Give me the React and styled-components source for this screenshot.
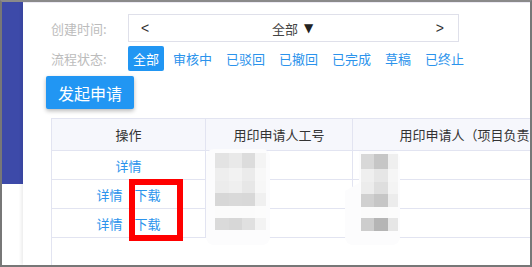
import React from "react";
import styled, { createGlobalStyle } from "styled-components";

const GlobalStyle = createGlobalStyle`
  * { box-sizing: border-box; }
  html, body { margin: 0; padding: 0; background: #fff; }
  body {
    font-family: "Noto Sans CJK SC", "Noto Sans", "Liberation Sans", sans-serif;
    font-size: 13px;
  }
`;

const Frame = styled.div`
  width: 532px;
  height: 267px;
  border: 2px solid #777;
  border-top-color: #8a8a8a;
  display: flex;
  overflow: hidden;
  background: #fff;
`;

const Sidebar = styled.div`
  width: 21px;
  flex: none;
  display: flex;
  flex-direction: column;
`;

const SideBlue = styled.div`
  height: 182px;
  background: #3d4aa9;
`;

const Main = styled.div`
  flex: 1;
  min-width: 0;
  display: flex;
  flex-direction: column;
  padding: 11px 0 0 28px;
  box-shadow: -2px 0 3px rgba(0, 0, 0, 0.07);
  position: relative;
  border-top: 1px solid #eceaf4;
`;

const FormRow = styled.div`
  display: flex;
  align-items: center;
  height: ${(p) => p.$h}px;
  margin-bottom: ${(p) => p.$mb}px;
`;

const Label = styled.div`
  width: 77px;
  flex: none;
  color: #bcbcbc;
  font-size: 13px;
  white-space: nowrap;
`;

const DateBox = styled.div`
  width: 331px;
  height: 28px;
  border: 1px solid #dfe0ea;
  display: flex;
  align-items: center;
  justify-content: space-between;
  padding: 0 14px 0 12px;
  color: #333;
  font-size: 13px;
`;

const Arrow = styled.span`
  font-family: "Liberation Sans", sans-serif;
  font-size: 14px;
`;

const DateValue = styled.span`
  display: flex;
  align-items: center;
  gap: 6px;
  color: #444;
`;

const Tri = styled.span`
  font-family: "DejaVu Sans", sans-serif;
  font-size: 12px;
  color: #222;
`;

const Tags = styled.div`
  display: flex;
  gap: 4px;
`;

const Tag = styled.span`
  height: 25px;
  line-height: 25px;
  padding: 0 5px;
  border-radius: 2px;
  font-size: 13px;
  background: ${(p) => (p.$active ? "#2196f3" : "transparent")};
  color: ${(p) => (p.$active ? "#fff" : "#2b93ec")};
`;

const ActionBar = styled.div`
  margin: 0 0 9px -5px;
`;

const PrimaryButton = styled.button`
  width: 88px;
  height: 33px;
  border: none;
  border-radius: 2px;
  background: #2196f3;
  color: #fff;
  font-family: inherit;
  font-size: 16px;
  padding: 0;
  box-shadow: 0 2px 4px rgba(0, 0, 0, 0.28);
`;

const TableWrap = styled.div`
  flex: 1;
  position: relative;
  border-left: 1px solid #e2e4f1;
  width: 560px;
`;

const Row = styled.div`
  display: grid;
  grid-template-columns: 154px 147px 250px;
  height: ${(p) => (p.$head ? 33 : 29)}px;
  background: ${(p) => (p.$head ? "#f6f7fc" : "#fff")};
  border-top: ${(p) => (p.$head ? "1px solid #e2e4f1" : "none")};
  border-bottom: 1px solid #e2e4f1;
`;

const Cell = styled.div`
  display: flex;
  align-items: center;
  justify-content: center;
  gap: 12px;
  border-right: 1px solid #e2e4f1;
  color: ${(p) => (p.$head ? "#333" : "#2b93ec")};
  font-size: 13px;
  white-space: nowrap;
  overflow: hidden;
`;

const Patch = styled.div`
  position: absolute;
  left: ${(p) => p.$x}px;
  top: ${(p) => p.$y}px;
  width: ${(p) => p.$w}px;
  height: ${(p) => p.$h}px;
  background: #fcfcfd;
  border-radius: 8px;
  padding: ${(p) => p.$pad};
  clip-path: ${(p) => p.$clip || "none"};
`;

const Mosaic = styled.div`
  display: grid;
  grid-template-columns: ${(p) => p.$cols};
  grid-template-rows: ${(p) => p.$rows};
`;

const Px = styled.div`
  background: ${(p) => p.$c};
`;

const Highlight = styled.div`
  position: absolute;
  left: 77px;
  top: 61px;
  width: 54px;
  height: 62px;
  border: 6px solid #ff0000;
`;

const mosaicA = [
  ["#e3e3e3", "#e9e9e9", "#dcdcdc", "#f4f4f4"],
  ["#eeeeee", "#f2f2f2", "#ebebeb", "#f8f8f8"],
  ["#ececec", "#efefef", "#e7e7e7", "#f7f7f7"],
  ["#d7d7d7", "#d9d9d9", "#d8d8d8", "#f0f0f0"],
  ["#fbfbfb", "#fbfbfb", "#fbfbfb", "#fcfcfc"],
  ["#dadada", "#d7d7d7", "#e0e0e0", "#f3f3f3"],
];

const mosaicB = [
  ["#d8d8d8", "#c6c6c6", "#efefef"],
  ["#efefef", "#e6e6e6", "#f6f6f6"],
  ["#ececec", "#dedede", "#f4f4f4"],
  ["#d0d0d0", "#c6c6c6", "#ececec"],
  ["#fbfbfb", "#fbfbfb", "#fcfcfc"],
  ["#cdcdcd", "#b5b5b5", "#e6e6e6"],
];

const statuses = ["全部", "审核中", "已驳回", "已撤回", "已完成", "草稿", "已终止"];

const rows = [["详情"], ["详情", "下载"], ["详情", "下载"]];

function Pixels({ data }) {
  return data.flatMap((r, i) => r.map((c, j) => <Px key={i + "-" + j} $c={c} />));
}

export default function App() {
  return (
    <>
      <GlobalStyle />
      <Frame>
        <Sidebar>
          <SideBlue />
        </Sidebar>
        <Main>
          <FormRow $h={28} $mb={4}>
            <Label>创建时间:</Label>
            <DateBox>
              <Arrow>&lt;</Arrow>
              <DateValue>
                全部 <Tri>▼</Tri>
              </DateValue>
              <Arrow>&gt;</Arrow>
            </DateBox>
          </FormRow>
          <FormRow $h={25} $mb={5}>
            <Label>流程状态:</Label>
            <Tags>
              {statuses.map((s, i) => (
                <Tag key={s} $active={i === 0}>
                  {s}
                </Tag>
              ))}
            </Tags>
          </FormRow>
          <ActionBar>
            <PrimaryButton>发起申请</PrimaryButton>
          </ActionBar>
          <TableWrap>
            <Row $head>
              <Cell $head>操作</Cell>
              <Cell $head>用印申请人工号</Cell>
              <Cell $head>用印申请人（项目负责人）</Cell>
            </Row>
            {rows.map((links, i) => (
              <Row key={i}>
                <Cell>
                  {links.map((l) => (
                    <span key={l}>{l}</span>
                  ))}
                </Cell>
                <Cell />
                <Cell />
              </Row>
            ))}
            <Patch $x={154} $y={31} $w={64} $h={96} $pad="4px 0 0 9px">
              <Mosaic $cols="14px 13px 13px 11px" $rows="15px 13px 12px 13px 12px 12px">
                <Pixels data={mosaicA} />
              </Mosaic>
            </Patch>
            <Patch
              $x={293}
              $y={33}
              $w={55}
              $h={94}
              $pad="3px 0 0 16px"
              $clip="polygon(14px 0, 100% 0, 100% 100%, 0 100%, 0 40px, 14px 32px)"
            >
              <Mosaic $cols="13px 14px 10px" $rows="15px 13px 12px 13px 11px 13px">
                <Pixels data={mosaicB} />
              </Mosaic>
            </Patch>
            <Highlight />
          </TableWrap>
        </Main>
      </Frame>
    </>
  );
}
